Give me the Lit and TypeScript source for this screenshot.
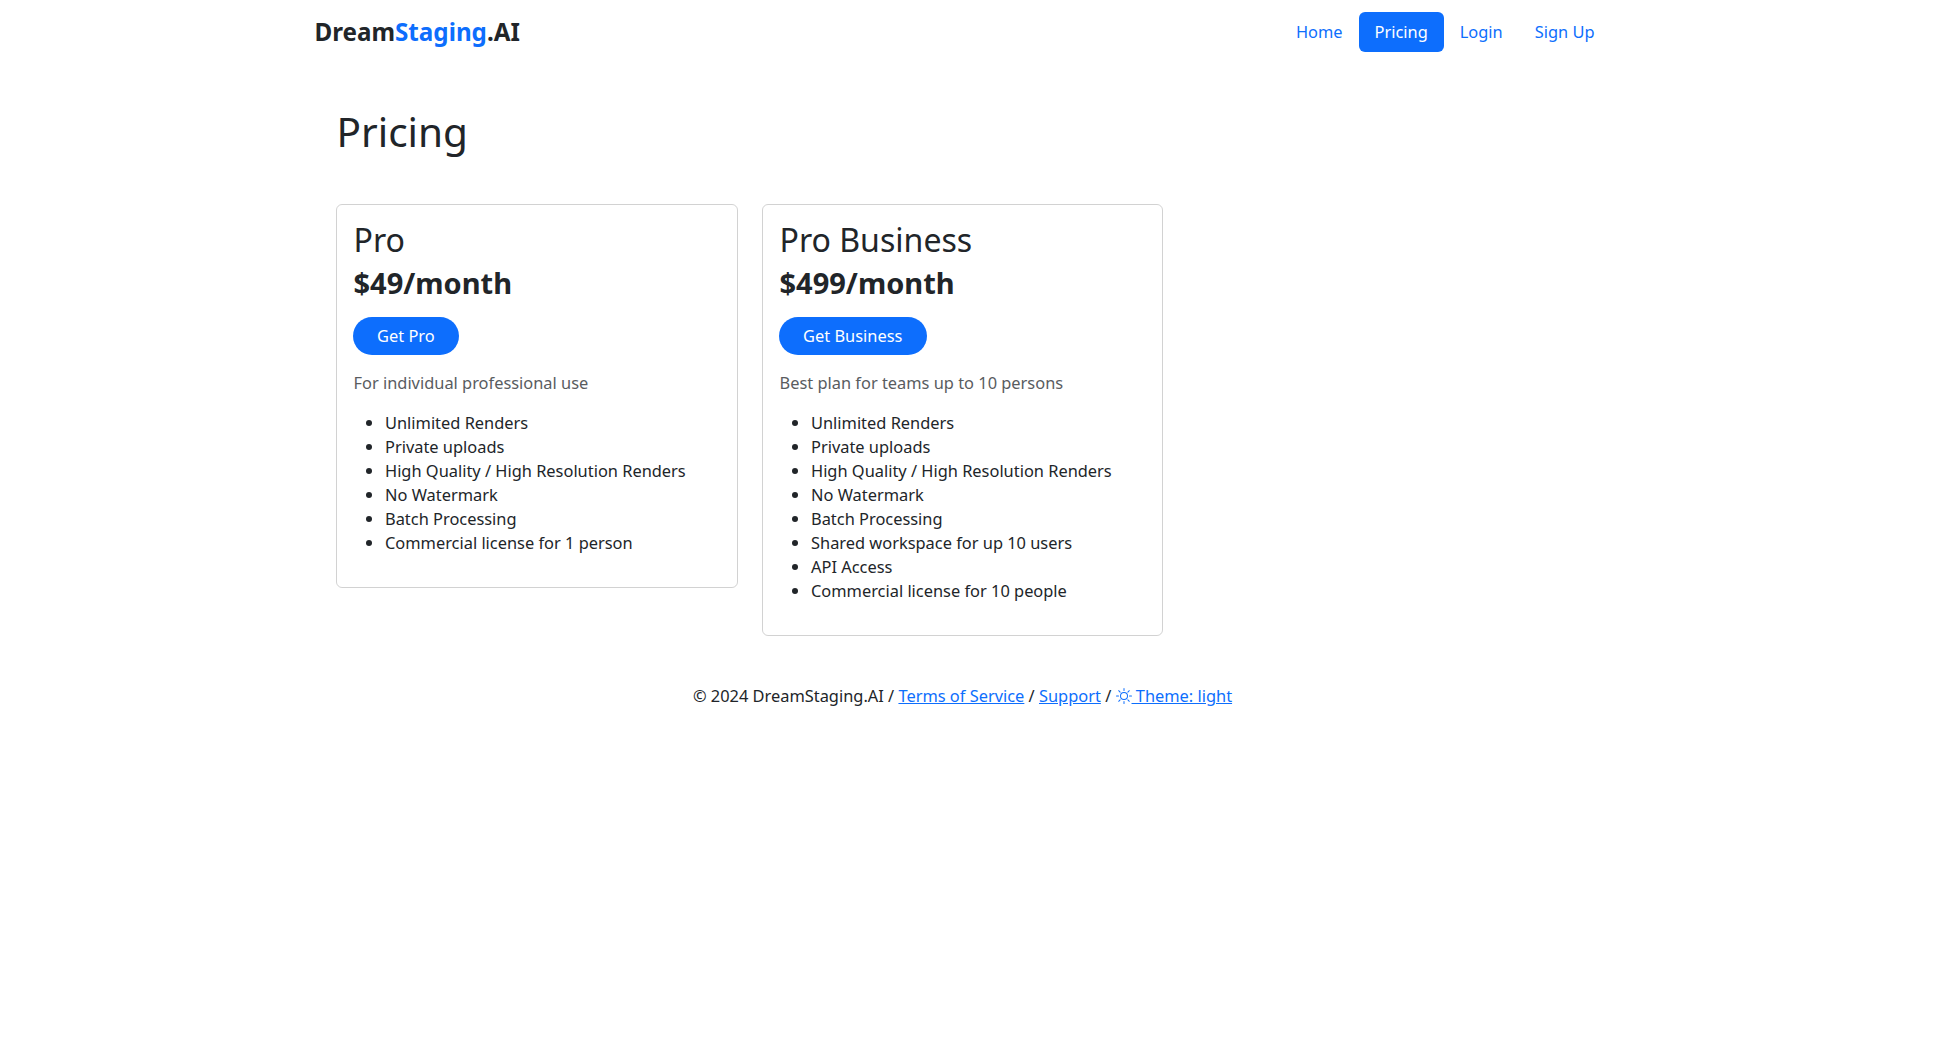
import { LitElement, html, css } from "lit";
import { customElement } from "lit/decorators.js";

const sun = html`<svg class="sun" viewBox="0 0 16 16" fill="currentColor"><path d="M8 11a3 3 0 1 1 0-6 3 3 0 0 1 0 6m0 1a4 4 0 1 0 0-8 4 4 0 0 0 0 8M8 0a.5.5 0 0 1 .5.5v2a.5.5 0 0 1-1 0v-2A.5.5 0 0 1 8 0m0 13a.5.5 0 0 1 .5.5v2a.5.5 0 0 1-1 0v-2A.5.5 0 0 1 8 13m8-5a.5.5 0 0 1-.5.5h-2a.5.5 0 0 1 0-1h2a.5.5 0 0 1 .5.5M3 8a.5.5 0 0 1-.5.5h-2a.5.5 0 0 1 0-1h2A.5.5 0 0 1 3 8m10.657-5.657a.5.5 0 0 1 0 .707l-1.414 1.415a.5.5 0 1 1-.707-.708l1.414-1.414a.5.5 0 0 1 .707 0m-9.193 9.193a.5.5 0 0 1 0 .707L3.05 13.657a.5.5 0 0 1-.707-.707l1.414-1.414a.5.5 0 0 1 .707 0m9.193 2.121a.5.5 0 0 1-.707 0l-1.414-1.414a.5.5 0 0 1 .707-.707l1.414 1.414a.5.5 0 0 1 0 .707M4.464 4.465a.5.5 0 0 1-.707 0L2.343 3.05a.5.5 0 1 1 .707-.707l1.414 1.414a.5.5 0 0 1 0 .708"/></svg>`;

const plans = [
  {
    name: "Pro",
    price: "$49/month",
    cta: "Get Pro",
    desc: "For individual professional use",
    cls: "pro",
    items: ["Unlimited Renders", "Private uploads", "High Quality / High Resolution Renders", "No Watermark", "Batch Processing", "Commercial license for 1 person"],
  },
  {
    name: "Pro Business",
    price: "$499/month",
    cta: "Get Business",
    desc: "Best plan for teams up to 10 persons",
    cls: "biz",
    items: ["Unlimited Renders", "Private uploads", "High Quality / High Resolution Renders", "No Watermark", "Batch Processing", "Shared workspace for up 10 users", "API Access", "Commercial license for 10 people"],
  },
];

@customElement("app-root")
export class AppRoot extends LitElement {
  static styles = css`
    :host { display: block; box-sizing: border-box; padding-right: 9px; font-family: "Noto Sans", "Open Sans", sans-serif; font-size: 16.4px; line-height: 24px; color: #212529; background: #fff; min-height: 1052px; }
    a { color: #0d6efd; }
    .nav { width: 1320px; margin: 0 auto; box-sizing: border-box; padding: 12px 12px 0; display: flex; justify-content: space-between; align-items: flex-start; }
    .brand { font-size: 24.2px; font-weight: 700; line-height: 40px; color: #212529; }
    .brand span { color: #0d6efd; }
    .links { display: flex; gap: 0; }
    .links a { text-decoration: none; padding: 8px 16px; border-radius: 6px; line-height: 24px; }
    .links a.active { background: #0d6efd; color: #fff; }
    .main { width: 1320px; margin: 0 auto; box-sizing: border-box; padding: 0 12px 0 33px; }
    h1 { font-size: 40.5px; font-weight: 400; line-height: 48px; margin: 56px 0 0 1px; }
    .cards { display: flex; gap: 24px; align-items: flex-start; margin-top: 48px; }
    .card { box-sizing: border-box; border: 1px solid rgba(0, 0, 0, 0.175); border-radius: 6px; padding: 16px 16px 16px 17px; }
    .pro { width: 402px; }
    .biz { width: 401px; }
    h2 { font-size: 32.1px; font-weight: 400; line-height: 38px; margin: 0; }
    h3 { font-size: 29px; font-weight: 700; line-height: 34px; margin: 7px 0 0; }
    .btn { display: inline-block; margin: 17px 0 0 -1px; background: #0d6efd; color: #fff; text-decoration: none; padding: 7px 24.6px; border-radius: 19px; line-height: 24px; }
    .desc { color: #595c5f; margin: 16px 0 0; }
    ul { margin: 16px 0 16px; padding-left: 31.5px; }
    .footer { text-align: center; margin-top: 47px; padding-top: 1px; }
    .sun { width: 16px; height: 16px; vertical-align: -2px; }
  `;
  render() {
    return html`
      <div class="nav">
        <div class="brand">Dream<span>Staging</span>.AI</div>
        <div class="links"><a>Home</a><a class="active">Pricing</a><a>Login</a><a>Sign Up</a></div>
      </div>
      <div class="main">
        <h1>Pricing</h1>
        <div class="cards">
          ${plans.map((p) => html`
            <div class="card ${p.cls}">
              <h2>${p.name}</h2>
              <h3>${p.price}</h3>
              <a class="btn">${p.cta}</a>
              <p class="desc">${p.desc}</p>
              <ul>${p.items.map((i) => html`<li>${i}</li>`)}</ul>
            </div>`)}
        </div>
      </div>
      <div class="footer">© 2024 DreamStaging.AI / <a href="#">Terms of Service</a> / <a href="#">Support</a> / <a href="#">${sun} Theme: light</a></div>
    `;
  }
}
